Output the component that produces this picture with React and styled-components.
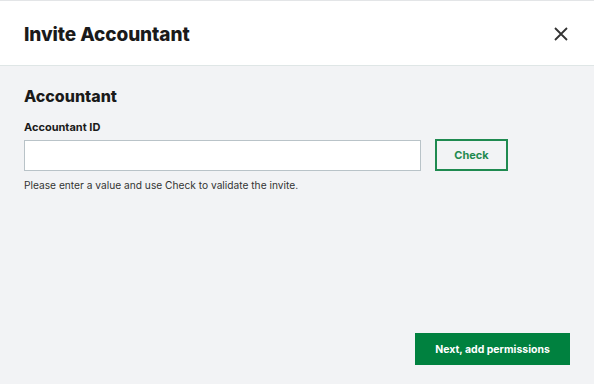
import React from 'react'
import styled, { createGlobalStyle } from 'styled-components';

const GlobalStyle = createGlobalStyle`
    html, body {
        margin: 0;
        padding: 0;
        width: 594px;
        height: 384px;
        overflow: hidden;
        background: #f2f3f5;
    }
    * { box-sizing: border-box; }
`;

const Dialog = styled.div`
    display: flex;
    flex-direction: column;
    width: 594px;
    height: 384px;
    font-family: Inter, "Liberation Sans", sans-serif;
    color: #1a1a1a;
    background: #f2f3f5;
    border-top: 1px solid #e3e5e7;
`;

const Header = styled.div`
    display: flex;
    align-items: center;
    justify-content: space-between;
    height: 65px;
    padding: 2px 24px 0;
    background: #ffffff;
    border-bottom: 1px solid #dfe6e6;
`;

const Title = styled.h1`
    margin: 0;
    font-size: 19px;
    font-weight: 800;
    letter-spacing: -0.1px;
`;

const Close = styled.button`
    display: flex;
    align-items: center;
    justify-content: center;
    width: 24px;
    height: 24px;
    padding: 0;
    margin-right: -3px;
    border: none;
    background: none;
    color: #333;
`;

const Body = styled.div`
    flex: 1;
    display: flex;
    flex-direction: column;
    padding: 20px 24px 19px;
`;

const Section = styled.h2`
    margin: 0 0 14px;
    font-size: 16px;
    font-weight: 800;
`;

const Label = styled.label`
    display: block;
    font-size: 11px;
    font-weight: 700;
    margin-bottom: 6px;
`;

const Row = styled.div`
    display: flex;
    align-items: center;
    gap: 14px;
`;

const Input = styled.input`
    width: 397px;
    height: 31px;
    border: 1px solid #b9c3c8;
    background: #fff;
    outline: none;
`;

const CheckButton = styled.button`
    width: 73px;
    height: 32px;
    margin-top: -1px;
    border: 2px solid #1f8a50;
    background: transparent;
    color: #1f8a50;
    font-family: inherit;
    font-size: 11px;
    font-weight: 700;
`;

const Help = styled.p`
    margin: 8px 0 0;
    font-size: 10.2px;
    color: #333;
`;

const Footer = styled.div`
    margin-top: auto;
    display: flex;
    justify-content: flex-end;
`;

const PrimaryButton = styled.button`
    width: 155px;
    height: 32px;
    border: none;
    background: #00813f;
    color: #fff;
    font-family: inherit;
    font-size: 10.5px;
    font-weight: 700;
`;

const App = () => {
    return (
        <>
            <GlobalStyle />
            <Dialog>
                <Header>
                    <Title>Invite Accountant</Title>
                    <Close aria-label="Close">
                        <svg width="14" height="14" viewBox="0 0 14 14">
                            <path d="M1 1L13 13M13 1L1 13" stroke="currentColor" strokeWidth="1.8" />
                        </svg>
                    </Close>
                </Header>
                <Body>
                    <Section>Accountant</Section>
                    <Label>Accountant ID</Label>
                    <Row>
                        <Input />
                        <CheckButton>Check</CheckButton>
                    </Row>
                    <Help>Please enter a value and use Check to validate the invite.</Help>
                    <Footer>
                        <PrimaryButton>Next, add permissions</PrimaryButton>
                    </Footer>
                </Body>
            </Dialog>
        </>
    )
}

export default App;
